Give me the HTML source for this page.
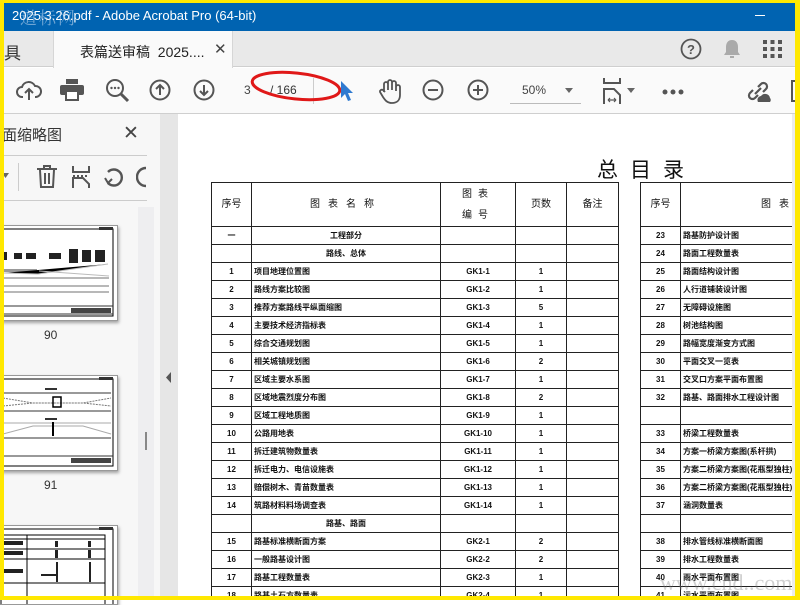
<!DOCTYPE html>
<html><head><meta charset="utf-8"><style>
*{margin:0;padding:0;box-sizing:border-box}
body{width:800px;height:600px;overflow:hidden;background:#fff;font-family:"Liberation Sans","Noto Sans CJK SC",sans-serif;position:relative}
.a{position:absolute}
.yl{background:#ffe800}
svg{position:absolute}
table{border-collapse:collapse;position:absolute;table-layout:fixed;font-family:"Liberation Sans","Noto Sans CJK SC",sans-serif}
td{border:1px solid #222;height:18px;line-height:16px;font-size:8px;text-align:center;color:#111;padding:0;white-space:nowrap;overflow:hidden;font-weight:bold}
td.l{text-align:left;padding-left:2px}
tr.h td{height:44px;font-size:10px;font-weight:normal}
.th{background:#fff;border:1px solid #999;box-shadow:1px 2px 3px rgba(0,0,0,.35)}
</style></head><body>
<!-- title bar -->
<div class="a" style="left:0;top:0;width:800px;height:31px;background:#0063b1"></div>
<div class="a" style="left:12px;top:8px;color:#fff;font-size:13px">2025.3.26.pdf - Adobe Acrobat Pro (64-bit)</div>
<div class="a" style="left:20px;top:4px;color:rgba(200,220,240,.55);font-size:17px;font-family:'Noto Serif CJK SC',serif;letter-spacing:2px">道标网</div>
<div class="a" style="left:755px;top:15px;width:10px;height:1px;background:#fff"></div>
<!-- tab bar -->
<div class="a" style="left:0;top:31px;width:800px;height:36px;background:#e9e9e9;border-bottom:1px solid #cfcfcf"></div>
<div class="a" style="left:4px;top:39px;font-size:17px;color:#333">具</div>
<div class="a" style="left:53px;top:31px;width:180px;height:37px;background:#fafafa;border-left:1px solid #d6d6d6;border-right:1px solid #d6d6d6"></div>
<div class="a" style="left:80px;top:42px;font-size:14px;color:#222">表篇送审稿&nbsp; 2025....</div>
<div class="a" style="left:214px;top:40px;font-size:15px;color:#444">✕</div>
<svg style="left:680px;top:38px" width="22" height="22"><circle cx="11" cy="11" r="9.5" fill="none" stroke="#555" stroke-width="1.8"/><text x="11" y="16" font-size="13" font-weight="bold" fill="#555" text-anchor="middle" font-family="Liberation Sans">?</text></svg>
<svg style="left:723px;top:38px" width="18" height="22"><path d="M9 2c-4 0-6 3-6 7v5l-2 3h16l-2-3V9c0-4-2-7-6-7z" fill="#aaa"/><rect x="7" y="18" width="4" height="2" fill="#aaa"/></svg>
<svg style="left:763px;top:40px" width="20" height="18" fill="#555"><rect x="0" y="0" width="4" height="4"/><rect x="7.5" y="0" width="4" height="4"/><rect x="15" y="0" width="4" height="4"/><rect x="0" y="7" width="4" height="4"/><rect x="7.5" y="7" width="4" height="4"/><rect x="15" y="7" width="4" height="4"/><rect x="0" y="14" width="4" height="4"/><rect x="7.5" y="14" width="4" height="4"/><rect x="15" y="14" width="4" height="4"/></svg>
<!-- toolbar -->
<div class="a" style="left:0;top:68px;width:800px;height:46px;background:#fafafa;border-bottom:1px solid #cfcfcf"></div>
<svg style="left:16px;top:78px" width="26" height="24" fill="none" stroke="#555" stroke-width="2"><path d="M7 19H6a5 5 0 0 1 0-10 7 7 0 0 1 13-1 5 5 0 0 1 1 11h-1"/><path d="M13 22V11M9 15l4-4 4 4"/></svg>
<svg style="left:60px;top:79px" width="24" height="22" fill="#555"><rect x="6" y="0" width="12" height="5"/><rect x="0" y="6" width="24" height="10" rx="2"/><rect x="6" y="12" width="12" height="9" fill="#fff" stroke="#555" stroke-width="2"/></svg>
<svg style="left:105px;top:78px" width="26" height="26" fill="none" stroke="#555" stroke-width="2"><circle cx="10" cy="10" r="8"/><path d="M16 16l7 7" stroke-width="3"/><g fill="#555" stroke="none"><circle cx="6.5" cy="10" r="1.2"/><circle cx="10" cy="10" r="1.2"/><circle cx="13.5" cy="10" r="1.2"/></g></svg>
<svg style="left:149px;top:79px" width="22" height="22" fill="none" stroke="#555" stroke-width="2"><circle cx="11" cy="11" r="9.5"/><path d="M11 16V6M7 10l4-4 4 4"/></svg>
<svg style="left:193px;top:79px" width="22" height="22" fill="none" stroke="#555" stroke-width="2"><circle cx="11" cy="11" r="9.5"/><path d="M11 6v10M7 12l4 4 4-4"/></svg>
<div class="a" style="left:244px;top:83px;font-size:12px;color:#444">3</div>
<div class="a" style="left:270px;top:83px;font-size:12px;color:#333">/ 166</div>
<div class="a" style="left:313px;top:78px;width:1px;height:26px;background:#ccc"></div>
<svg style="left:250px;top:70px" width="100" height="36"><ellipse cx="46" cy="16" rx="44" ry="13" fill="none" stroke="#e01818" stroke-width="3" transform="rotate(6 46 16)"/></svg>
<svg style="left:339px;top:80px" width="16" height="22"><path d="M2 1l12 12-5 0 3 7-3 1-3-7-4 4z" fill="#2f7ad0"/></svg>
<svg style="left:378px;top:78px" width="24" height="26" fill="none" stroke="#555" stroke-width="1.8"><path d="M6 14V6a2 2 0 0 1 4 0v6V4a2 2 0 0 1 4 0v8V5a2 2 0 0 1 4 0v8-4a2 2 0 0 1 4 0v8c0 5-3 8-8 8s-7-3-9-6l-3-5a2 2 0 0 1 3-2l2 2"/></svg>
<svg style="left:422px;top:79px" width="22" height="22" fill="none" stroke="#555" stroke-width="2"><circle cx="11" cy="11" r="9.5"/><path d="M6 11h10"/></svg>
<svg style="left:467px;top:79px" width="22" height="22" fill="none" stroke="#555" stroke-width="2"><circle cx="11" cy="11" r="9.5"/><path d="M6 11h10M11 6v10"/></svg>
<div class="a" style="left:522px;top:83px;font-size:12px;color:#444">50%</div>
<svg style="left:565px;top:88px" width="10" height="6"><path d="M0 0h8l-4 5z" fill="#666"/></svg>
<div class="a" style="left:510px;top:103px;width:71px;height:1px;background:#bbb"></div>
<svg style="left:602px;top:78px" width="22" height="26" fill="none" stroke="#555" stroke-width="2"><path d="M2 0v5h16V0M2 26v-15h10l6 6v9"/><path d="M6 22h8M6 22l2-2M6 22l2 2M14 22l-2-2M14 22l-2 2" stroke-width="1.2"/></svg>
<svg style="left:627px;top:88px" width="10" height="6"><path d="M0 0h8l-4 5z" fill="#666"/></svg>
<svg style="left:662px;top:89px" width="22" height="6" fill="#555"><circle cx="3" cy="3" r="2.5"/><circle cx="11" cy="3" r="2.5"/><circle cx="19" cy="3" r="2.5"/></svg>
<svg style="left:745px;top:80px" width="28" height="24"><path d="M10 14l6-6M8 10l-3 3a3.5 3.5 0 0 0 5 5l3-3M13 7l3-3a3.5 3.5 0 0 1 5 5l-3 3" fill="none" stroke="#555" stroke-width="2.2"/><path d="M13 22a4 4 0 0 1 3-6 5 5 0 0 1 9 2 3 3 0 0 1 0 4z" fill="#555"/></svg>
<div class="a" style="left:791px;top:80px;width:4px;height:22px;border:2px solid #555;border-right:none"></div>
<!-- left panel -->
<div class="a" style="left:0;top:114px;width:160px;height:486px;background:#f7f7f7"></div>
<div class="a" style="left:2px;top:124px;font-size:15px;color:#333">面缩略图</div>
<div class="a" style="left:123px;top:122px;font-size:19px;color:#444">✕</div>
<div class="a" style="left:0;top:155px;width:147px;height:1px;background:#ccc"></div>
<svg style="left:2px;top:173px" width="8" height="6"><path d="M0 0h7l-3.5 5z" fill="#666"/></svg>
<div class="a" style="left:18px;top:163px;width:1px;height:28px;background:#ccc"></div>
<svg style="left:36px;top:165px" width="22" height="24" fill="none" stroke="#555" stroke-width="2"><path d="M1 4h20M8 4V1h6v3M4 5l1 17h12l1-17M9 8v11M13 8v11"/></svg>
<svg style="left:71px;top:166px" width="20" height="22" fill="none" stroke="#555" stroke-width="2"><path d="M2 0v6h16V0M2 22v-10h10l6 6v4" /><path d="M2 10h16" stroke-dasharray="2 2"/></svg>
<svg style="left:103px;top:166px" width="22" height="22" fill="none" stroke="#555" stroke-width="2.4"><path d="M5 17A8 8 0 1 0 5 6"/><path d="M2 12l3 5 4-4" stroke-width="2"/></svg>
<svg style="left:136px;top:166px" width="12" height="22" fill="none" stroke="#555" stroke-width="2.4"><path d="M10 2A8 8 0 0 0 10 20"/></svg>
<div class="a" style="left:0;top:200px;width:147px;height:1px;background:#ccc"></div>
<div class="a" style="left:138px;top:207px;width:16px;height:393px;background:#eeeef0"></div>
<div class="a" style="left:145px;top:432px;width:2px;height:18px;background:#888"></div>
<!-- thumbnails -->
<div class="a th" style="left:-2px;top:225px;width:120px;height:96px;overflow:hidden">
<svg width="118" height="94" viewBox="0 0 118 94" style="left:0;top:0"><rect x="2" y="3" width="112" height="87" fill="none" stroke="#000"/><rect x="100" y="1" width="14" height="3" fill="#333"/><g fill="#222"><rect x="4" y="26" width="4" height="8"/><rect x="15" y="27" width="8" height="6"/><rect x="27" y="27" width="10" height="6"/><rect x="50" y="27" width="12" height="6"/><rect x="70" y="23" width="9" height="14"/><rect x="83" y="24" width="9" height="12"/><rect x="96" y="24" width="10" height="12"/></g><path d="M4 52h106M4 60h106M4 66h106" stroke="#444" stroke-width=".8"/><rect x="4" y="43" width="34" height="3" fill="#999"/><path d="M4 47l35 1 70-10M40 45l70 5" stroke="#bbb"/><path d="M4 80h110M4 88h110" stroke="#333"/><rect x="72" y="82" width="40" height="5" fill="#444"/></svg></div>
<div class="a" style="left:44px;top:328px;font-size:12px;color:#333">90</div>
<div class="a th" style="left:-2px;top:375px;width:120px;height:96px;overflow:hidden">
<svg width="118" height="94" viewBox="0 0 118 94" style="left:0;top:0"><rect x="2" y="3" width="112" height="87" fill="none" stroke="#000"/><rect x="100" y="1" width="14" height="3" fill="#333"/><rect x="46" y="12" width="12" height="2" fill="#333"/><path d="M4 17h108M4 35h108M4 62h108" stroke="#333"/><path d="M4 22l30 5h50l28-5M4 30l30-3h50l28 3" stroke="#777" stroke-dasharray="2 1" fill="none"/><rect x="54" y="21" width="8" height="10" fill="none" stroke="#000" stroke-width="1.5"/><rect x="46" y="42" width="12" height="2" fill="#333"/><path d="M4 47h108M4 58l30-8h50l28 8" stroke="#aaa" fill="none"/><rect x="53" y="46" width="2" height="14" fill="#000"/><path d="M4 80h110" stroke="#333"/><rect x="72" y="82" width="40" height="5" fill="#444"/></svg></div>
<div class="a" style="left:44px;top:478px;font-size:12px;color:#333">91</div>
<div class="a th" style="left:-2px;top:525px;width:120px;height:80px;overflow:hidden">
<svg width="118" height="80" viewBox="0 0 118 80" style="left:0;top:0"><rect x="2" y="3" width="112" height="80" fill="none" stroke="#000"/><rect x="100" y="1" width="14" height="3" fill="#333"/><path d="M2 9h104v80M2 13h104M28 9v80M2 23h104M2 33h104M2 57h104" stroke="#000" fill="none"/><g fill="#222"><rect x="4" y="15" width="20" height="4"/><rect x="4" y="25" width="20" height="4"/><rect x="4" y="43" width="20" height="4"/><rect x="56" y="15" width="3" height="6"/><rect x="89" y="15" width="3" height="6"/><rect x="56" y="24" width="3" height="8"/><rect x="89" y="24" width="3" height="8"/><rect x="57" y="36" width="2" height="20"/><rect x="90" y="36" width="2" height="20"/><rect x="42" y="48" width="16" height="2"/></g></svg></div>
<!-- collapse strip -->
<div class="a" style="left:160px;top:114px;width:18px;height:486px;background:#e6e6e6"></div>
<svg style="left:166px;top:372px" width="6" height="12"><path d="M5 0v11L0 5.5z" fill="#555"/></svg>
<!-- page -->
<div class="a" style="left:178px;top:115px;width:614px;height:485px;overflow:hidden">
<div class="a" style="left:419px;top:44px;font-size:21px;line-height:24px;color:#111;letter-spacing:12px">总目录</div>
<table style="left:33px;top:67px;width:407px">
<colgroup><col style="width:40px"><col style="width:189px"><col style="width:75px"><col style="width:51px"><col style="width:52px"></colgroup>
<tr class="h"><td>序号</td><td style="letter-spacing:8px">图表名称</td><td style="line-height:21px;letter-spacing:6px">图表<br>编号</td><td>页数</td><td>备注</td></tr>
<tr><td>一</td><td>工程部分</td><td></td><td></td><td></td></tr>
<tr><td></td><td>路线、总体</td><td></td><td></td><td></td></tr>
<tr><td>1</td><td class="l">项目地理位置图</td><td>GK1-1</td><td>1</td><td></td></tr>
<tr><td>2</td><td class="l">路线方案比较图</td><td>GK1-2</td><td>1</td><td></td></tr>
<tr><td>3</td><td class="l">推荐方案路线平纵面缩图</td><td>GK1-3</td><td>5</td><td></td></tr>
<tr><td>4</td><td class="l">主要技术经济指标表</td><td>GK1-4</td><td>1</td><td></td></tr>
<tr><td>5</td><td class="l">综合交通规划图</td><td>GK1-5</td><td>1</td><td></td></tr>
<tr><td>6</td><td class="l">相关城镇规划图</td><td>GK1-6</td><td>2</td><td></td></tr>
<tr><td>7</td><td class="l">区域主要水系图</td><td>GK1-7</td><td>1</td><td></td></tr>
<tr><td>8</td><td class="l">区域地震烈度分布图</td><td>GK1-8</td><td>2</td><td></td></tr>
<tr><td>9</td><td class="l">区域工程地质图</td><td>GK1-9</td><td>1</td><td></td></tr>
<tr><td>10</td><td class="l">公路用地表</td><td>GK1-10</td><td>1</td><td></td></tr>
<tr><td>11</td><td class="l">拆迁建筑物数量表</td><td>GK1-11</td><td>1</td><td></td></tr>
<tr><td>12</td><td class="l">拆迁电力、电信设施表</td><td>GK1-12</td><td>1</td><td></td></tr>
<tr><td>13</td><td class="l">赔偿树木、青苗数量表</td><td>GK1-13</td><td>1</td><td></td></tr>
<tr><td>14</td><td class="l">筑路材料料场调查表</td><td>GK1-14</td><td>1</td><td></td></tr>
<tr><td></td><td>路基、路面</td><td></td><td></td><td></td></tr>
<tr><td>15</td><td class="l">路基标准横断面方案</td><td>GK2-1</td><td>2</td><td></td></tr>
<tr><td>16</td><td class="l">一般路基设计图</td><td>GK2-2</td><td>2</td><td></td></tr>
<tr><td>17</td><td class="l">路基工程数量表</td><td>GK2-3</td><td>1</td><td></td></tr>
<tr><td>18</td><td class="l">路基土石方数量表</td><td>GK2-4</td><td>1</td><td></td></tr>
</table>
<table style="left:462px;top:67px;width:200px">
<colgroup><col style="width:40px"><col style="width:160px"></colgroup>
<tr class="h"><td>序号</td><td style="letter-spacing:8px;text-align:left;padding-left:80px">图表名称</td></tr>
<tr><td>23</td><td class="l">路基防护设计图</td></tr>
<tr><td>24</td><td class="l">路面工程数量表</td></tr>
<tr><td>25</td><td class="l">路面结构设计图</td></tr>
<tr><td>26</td><td class="l">人行道铺装设计图</td></tr>
<tr><td>27</td><td class="l">无障碍设施图</td></tr>
<tr><td>28</td><td class="l">树池结构图</td></tr>
<tr><td>29</td><td class="l">路幅宽度渐变方式图</td></tr>
<tr><td>30</td><td class="l">平面交叉一览表</td></tr>
<tr><td>31</td><td class="l">交叉口方案平面布置图</td></tr>
<tr><td>32</td><td class="l">路基、路面排水工程设计图</td></tr>
<tr><td></td><td class="l" style="padding-left:123px">桥梁、涵洞</td></tr>
<tr><td>33</td><td class="l">桥梁工程数量表</td></tr>
<tr><td>34</td><td class="l">方案一桥梁方案图(系杆拱)</td></tr>
<tr><td>35</td><td class="l">方案二桥梁方案图(花瓶型独柱)</td></tr>
<tr><td>36</td><td class="l">方案二桥梁方案图(花瓶型独柱)</td></tr>
<tr><td>37</td><td class="l">涵洞数量表</td></tr>
<tr><td></td><td class="l" style="padding-left:128px">沿线设施</td></tr>
<tr><td>38</td><td class="l">排水管线标准横断面图</td></tr>
<tr><td>39</td><td class="l">排水工程数量表</td></tr>
<tr><td>40</td><td class="l">雨水平面布置图</td></tr>
<tr><td>41</td><td class="l">污水平面布置图</td></tr>
</table>
<div class="a" style="left:482px;top:455px;font-size:22px;color:rgba(120,120,120,.35);font-family:'Liberation Serif',serif;white-space:nowrap">www.cnd..com</div>
</div>
<div class="a" style="left:792px;top:114px;width:4px;height:486px;background:#ececec"></div>
<!-- yellow border -->
<div class="a yl" style="left:0;top:0;width:800px;height:3px"></div>
<div class="a yl" style="left:0;top:0;width:4px;height:600px"></div>
<div class="a yl" style="left:795px;top:0;width:5px;height:600px"></div>
<div class="a yl" style="left:0;top:596px;width:800px;height:4px"></div>
</body></html>
